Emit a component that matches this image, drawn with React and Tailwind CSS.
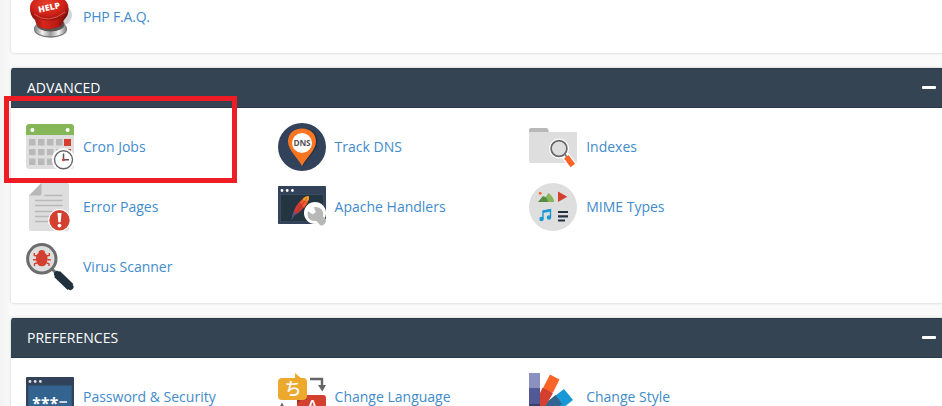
import React from 'react';

const Icon = ({ children }) => (
  <svg viewBox="0 0 48 48" className="block h-12 w-12 shrink-0">{children}</svg>
);

const HelpIcon = () => (
  <Icon>
    <defs>
      <radialGradient id="helpTop" cx="0.45" cy="0.35" r="0.7">
        <stop offset="0" stopColor="#e8402c" />
        <stop offset="0.6" stopColor="#d02218" />
        <stop offset="1" stopColor="#8c100c" />
      </radialGradient>
      <linearGradient id="helpSide" x1="0" x2="1">
        <stop offset="0" stopColor="#7c1210" />
        <stop offset="0.35" stopColor="#d8261b" />
        <stop offset="0.7" stopColor="#b81b14" />
        <stop offset="1" stopColor="#5c0c0a" />
      </linearGradient>
      <linearGradient id="helpBase" x1="0" x2="1">
        <stop offset="0" stopColor="#777" />
        <stop offset="0.25" stopColor="#f2f2f2" />
        <stop offset="0.5" stopColor="#999" />
        <stop offset="0.75" stopColor="#f5f5f5" />
        <stop offset="1" stopColor="#777" />
      </linearGradient>
    </defs>
    <path d="M38 12 Q49 18 45 26 Q43 31 38 32 Z" fill="#d4d4d8" />
    <ellipse cx="24.500" cy="36.500" rx="16.500" ry="8.300" fill="#777" />
    <ellipse cx="24.500" cy="35.300" rx="16.400" ry="8" fill="url(#helpBase)" />
    <ellipse cx="24.500" cy="31.500" rx="14" ry="7" fill="#555" />
    <path d="M4 15 Q4 23 9 27 Q10 32 13 34 Q24 39 35 33 Q37 30 38 27 Q43 22 42.500 15Z" fill="url(#helpSide)" />
    <ellipse cx="23.200" cy="14.500" rx="19.200" ry="13" fill="url(#helpTop)" />
    <path d="M8 21 Q22 32 39 19" stroke="#ef7567" strokeWidth="1" fill="none" opacity="0.7" />
    <text x="23" y="17.500" textAnchor="middle" transform="rotate(-12 23 14)" fontFamily="Open Sans, sans-serif" fontWeight="800" fontSize="8.500" fill="#fff" textLength="22">HELP</text>
  </Icon>
);

const CronIcon = () => (
  <Icon>
    <rect y="1" width="48" height="45" rx="3.5" fill="#dedede" />
    <path d="M0 12V4.500A3.500 3.500 0 0 1 3.500 1H44.500A3.500 3.500 0 0 1 48 4.500V12Z" fill="#85b658" />
    <circle cx="6.400" cy="7" r="2" fill="#fff" />
    <circle cx="41.600" cy="7" r="2" fill="#fff" />
    <g fill="#b9b9b9">
      {[3, 12, 21, 30].map((x) => <rect key={x} x={x} y="16" width="6.500" height="6.500" />)}
      {[3, 12, 21, 30].map((x) => <rect key={x} x={x} y="26" width="6.500" height="6.200" />)}
      {[3, 12, 21].map((x) => <rect key={x} x={x} y="35.500" width="6.500" height="6.500" />)}
    </g>
    <rect x="38" y="16" width="7" height="7" fill="#d3402f" />
    <rect x="38" y="26" width="7" height="6" fill="#d3402f" />
    <circle cx="37.500" cy="36.800" r="11.600" fill="#fff" />
    <circle cx="37.500" cy="36.800" r="9" fill="#fff" stroke="#666" strokeWidth="1.400" />
    <path d="M37.500 30.500V36.800H43" fill="none" stroke="#555" strokeWidth="1.500" />
    <circle cx="37.500" cy="36.800" r="1.500" fill="#d3402f" />
  </Icon>
);

const ErrorIcon = () => (
  <Icon>
    <path d="M15 0H41Q43 0 43 2V46Q43 48 41 48H5Q3 48 3 46V12.500Z" fill="#dedede" />
    <path d="M15.500 0V10.500Q15.500 12.500 13.500 12.500H3Z" fill="#b8b8b8" />
    <path d="M18.500 12.500H36.500M9 17.500H36.500M9 22.500H36.500M9 28.500H36.500M9 33.500H25M9 38.500H25" stroke="#b8b8b8" strokeWidth="1.300" />
    <circle cx="33.500" cy="37.300" r="11.300" fill="#fff" />
    <circle cx="33.500" cy="37.300" r="10.200" fill="#d3402f" />
    <path d="M31.500 30H35.500L34.700 39.300H32.300Z" fill="#fff" />
    <circle cx="33.500" cy="42.600" r="1.900" fill="#fff" />
  </Icon>
);

const VirusIcon = () => (
  <Icon>
    <path d="M25 25L31 31" stroke="#777" strokeWidth="3" />
    <path d="M31 31L44.500 44" stroke="#22313e" strokeWidth="8.200" />
    <path d="M31 31L44.500 44" stroke="#22313e" strokeWidth="6" strokeLinecap="round" />
    <circle cx="15.800" cy="15.800" r="14.200" fill="#dedede" stroke="#6c6c6c" strokeWidth="3" />
    <path d="M11 13L8.300 12.500V10M20.500 13L23.300 12.500V10M10 16.700H7M21.500 16.700H24.800M11 20L8.500 20.700V23M20.500 20L23 20.700V23" stroke="#d3402f" strokeWidth="1.400" fill="none" />
    <path d="M12.500 10Q12.500 7 15.800 7T19 10Q22 12 21.500 17Q20.500 23.300 15.800 23.300T10 17Q9.500 12 12.500 10Z" fill="#d3402f" />
  </Icon>
);

const DnsIcon = () => (
  <Icon>
    <circle cx="24" cy="24" r="24" fill="#33425b" />
    <path d="M28 6C42 7 41 21 37 27L25 43Z" fill="#233342" />
    <path d="M24 43C20 35 10 27 10 18.500C10 10.500 16 5.500 24 5.500S38 10.500 38 18.500C38 27 28 35 24 43Z" fill="#fb741f" />
    <circle cx="24" cy="20" r="10" fill="#fff" />
    <text x="24" y="23" textAnchor="middle" fontFamily="Open Sans, sans-serif" fontWeight="700" fontSize="8.300" fill="#555" textLength="17">DNS</text>
  </Icon>
);

const ApacheIcon = () => (
  <Icon>
    <rect y="3" width="48" height="38" rx="0.800" fill="#33425b" />
    <g fill="#fff"><circle cx="4" cy="7.500" r="1.400" /><circle cx="9.200" cy="7.500" r="1.400" /><circle cx="14.400" cy="7.500" r="1.400" /></g>
    <rect x="2.500" y="11.800" width="43" height="27" fill="#233541" stroke="#485c69" strokeWidth="0.500" />
    <path d="M13.500 36.500L19 27" stroke="#4c4c86" strokeWidth="1.300" />
    <path d="M14 34Q14.500 30 17.500 25L23 26Q20 31 16 32.500Z" fill="#67517d" />
    <path d="M16 29Q17.500 22 23 17.500L28.500 20Q25 27 19 30.500Z" fill="#d53a2e" />
    <path d="M22 19Q26 13 30.500 13Q31.500 16 29.500 20L26 25Z" fill="#f45b27" />
    <path d="M25 15.500Q28 12.800 30.500 13Q31.500 14.500 30.500 17.500L26 18Z" fill="#f6a427" />
    <path d="M18 30L29 15" stroke="#963446" strokeWidth="0.700" />
    <circle cx="37" cy="30" r="11" fill="#fff" />
    <path d="M44 33L48 36.500V43H42L34 38Z" fill="#fff" />
    <path d="M30 28L34.200 31.200Q36.500 31 37.800 28.700L35.800 24.200Q40.500 23 43.700 26.500Q46 29.300 44.800 33.200L48 36.500Q48.300 39.500 46.300 41.300Q44.800 42.800 42.500 42.500L38.500 38Q33 38.500 30.500 35Q28.800 32 30 28Z" fill="#b8b8b8" />
  </Icon>
);

const IndexesIcon = () => (
  <Icon>
    <path d="M0 11V7Q0 5 2 5H17.500Q19 5 20 9H46Q48 9 48 11Z" fill="#b8b8b8" />
    <path d="M0 9H46Q48 9 48 11V38Q48 40 46 40H2Q0 40 0 38Z" fill="#dedede" />
    <circle cx="30" cy="25.500" r="10" fill="#fff" />
    <path d="M35 31L43.500 42" stroke="#fff" strokeWidth="8.500" />
    <circle cx="30" cy="25.500" r="7.900" fill="#dedede" stroke="#666" strokeWidth="1.700" />
    <path d="M35.500 31L38 34" stroke="#777" strokeWidth="1.800" />
    <path d="M37.300 33.800L43.800 42.500" stroke="#fb6428" strokeWidth="5.600" />
  </Icon>
);

const MimeIcon = () => (
  <Icon>
    <circle cx="24" cy="24" r="24" fill="#dedede" />
    <path d="M13 19L19.500 10Q25 14 25 19Z" fill="#85b658" />
    <path d="M9 19L14 13Q18 14 19 19Z" fill="#568b46" />
    <circle cx="11.200" cy="10.300" r="1.400" fill="#fb6428" />
    <path d="M29 8.500V19L38.300 13.700Z" fill="#d3402f" />
    <path d="M14 36V28L21.500 26.500V34" stroke="#1898d5" strokeWidth="1.400" fill="none" />
    <path d="M14 27.500L22 26V28.500L14 30Z" fill="#1898d5" />
    <circle cx="12.500" cy="36" r="2.200" fill="#1898d5" /><circle cx="20" cy="34.500" r="2.200" fill="#1898d5" />
    <path d="M29 29H39M29 33.300H39M29 37.500H36" stroke="#22313e" strokeWidth="2.200" />
  </Icon>
);

const PasswordIcon = () => (
  <Icon>
    <rect y="4" width="48" height="40" rx="0.800" fill="#33425b" />
    <g fill="#dedede"><circle cx="4" cy="8.500" r="1.400" /><circle cx="9.200" cy="8.500" r="1.400" /><circle cx="14.400" cy="8.500" r="1.400" /></g>
    <rect x="2.300" y="12.500" width="43.400" height="29" fill="#33648f" />
    <text x="6.300" y="35.500" fontFamily="Open Sans, sans-serif" fontWeight="700" fontSize="15.500" fill="#fff" textLength="26">***</text>
    <path d="M33.500 29H41" stroke="#fff" strokeWidth="1.300" />
  </Icon>
);

const LanguageIcon = () => (
  <Icon>
    <path d="M32 6H44V13" fill="none" stroke="#666" strokeWidth="2.400" />
    <path d="M40 12L44.300 18.500L48 12Z" fill="#666" />
    <path d="M0 37L4 29.500L8 37Z" fill="#666" />
    <rect x="19" y="22" width="29" height="24" rx="3" fill="#d3402f" />
    <path d="M19 31V27H29V22Q28 27 23 27Z" fill="#9c3028" />
    <path d="M4 5H17V0L23 5H25Q29 5 29 9V23Q29 27 25 27H4Q0 27 0 23V9Q0 5 4 5Z" fill="#eda82e" />
    <text x="15" y="22" textAnchor="middle" fontFamily="Noto Sans CJK JP, sans-serif" fontSize="17" fontWeight="500" fill="#fff">ち</text>
    <text x="34.500" y="37" textAnchor="middle" fontFamily="Open Sans, sans-serif" fontSize="15" fontWeight="600" fill="#fff">A</text>
  </Icon>
);

const StyleIcon = () => (
  <Icon>
    <path d="M13 33L35 16L44 27L20 46Z" fill="#1898d5" />
    <path d="M11 35L26.500 22L33 31L15 44Z" fill="#33648f" />
    <path d="M21 1.500L30.500 6.500L24 19.500L13 17Z" fill="#fb6428" />
    <path d="M13.500 14.800L24 20L11 43V20Z" fill="#d3402f" />
    <path d="M0 0H11V15H0Z" fill="#8b91bf" />
    <path d="M0 15H11V31H0Z" fill="#525994" />
    <path d="M0 31H11V48H0Z" fill="#363f68" />
  </Icon>
);

const Item = ({ icon: Glyph, label, labelClass = '' }) => (
  <a className="flex h-[60px] items-start gap-[9px] text-[14px] text-[#428bca]">
    <Glyph />
    <span className={`leading-[48px] whitespace-nowrap ${labelClass}`}>{label}</span>
  </a>
);

const Panel = ({ title, items, className = '' }) => (
  <section className={`shrink-0 overflow-hidden rounded-[3px] bg-white shadow-[0_0_3px_rgba(0,0,0,0.2)] ${className}`}>
    {title && (
      <header className="flex h-10 items-center justify-between border-y border-[#293a4a] bg-[#354453] pr-[10px] pl-4 text-[14px] text-white">
        <h2 className="pb-0.5">{title}</h2>
        <span className="mb-px h-[3px] w-[14px] rounded-[1px] bg-white" />
      </header>
    )}
    <div className={`grid grid-cols-[251.6px_251.6px_251.6px] pl-[15px] ${title ? 'pt-[15px]' : ''}`}>
      {items.map((item) => <Item key={item.label} {...item} />)}
    </div>
  </section>
);

const advanced = [
  { icon: CronIcon, label: 'Cron Jobs' },
  { icon: DnsIcon, label: 'Track DNS' },
  { icon: IndexesIcon, label: 'Indexes' },
  { icon: ErrorIcon, label: 'Error Pages' },
  { icon: ApacheIcon, label: 'Apache Handlers' },
  { icon: MimeIcon, label: 'MIME Types' },
  { icon: VirusIcon, label: 'Virus Scanner' },
];

const preferences = [
  { icon: PasswordIcon, label: 'Password & Security' },
  { icon: LanguageIcon, label: 'Change Language' },
  { icon: StyleIcon, label: 'Change Style' },
];

export default function App() {
  return (
    <main className="relative flex h-[406px] w-[942px] overflow-hidden bg-[#fafafa] font-['Open_Sans','Noto_Sans',sans-serif]">
      <div className="w-[11px] shrink-0 bg-linear-to-r from-[#f2f2f2] to-[#fafafa]" />
      <div className="-mr-1 flex grow flex-col gap-[15px]">
        <Panel items={[{ icon: HelpIcon, label: 'PHP F.A.Q.', labelClass: 'tracking-[-0.2px]' }]} className="-mt-[7px]" />
        <Panel title="ADVANCED" items={advanced} />
        <Panel title="PREFERENCES" items={preferences} />
      </div>
      <div className="absolute top-[96px] left-[4px] h-[87px] w-[233px] border-[5px] border-[#ee1c25]" />
    </main>
  );
}
